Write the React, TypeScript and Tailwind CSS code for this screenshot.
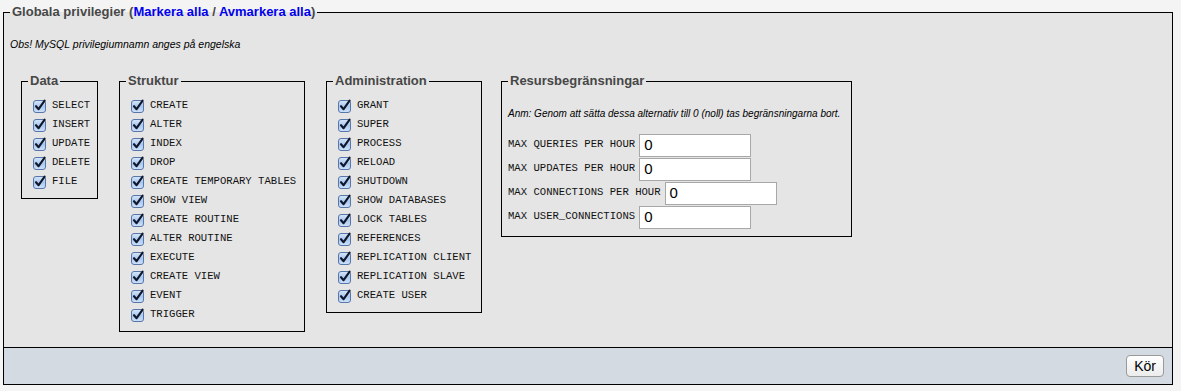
import React from "react";

const Check = () => (
  <svg width="14" height="14" viewBox="0 0 14 14" className="shrink-0">
    <defs>
      <linearGradient id="cbg" x1="0" y1="0" x2="0" y2="1">
        <stop offset="0" stopColor="#d8e7fa" />
        <stop offset="0.5" stopColor="#a9c8f0" />
        <stop offset="1" stopColor="#cfe2fb" />
      </linearGradient>
    </defs>
    <rect x="0.5" y="1.5" width="12" height="12" rx="2.5" fill="url(#cbg)" stroke="#5876a8" />
    <path d="M3 7.2 L5.6 10.2 L11.6 1.6" fill="none" stroke="#10172a" strokeWidth="2.1" strokeLinecap="round" strokeLinejoin="round" />
  </svg>
);

const mono = { fontFamily: '"Liberation Mono", "Courier New", monospace' };
const sans = { fontFamily: '"Liberation Sans", Arial, sans-serif' };

function Group({ title, items, width }: { title: string; items: string[]; width: string }) {
  return (
    <fieldset className={`border border-black pl-[6px] pb-[7px] ${width}`}>
      <legend className="px-[2px] text-[13px] leading-[16px] font-bold text-[#474747]" style={sans}>
        {title}
      </legend>
      <div className="pt-[7px] pl-[5px] flex flex-col">
        {items.map((it) => (
          <label key={it} className="h-[19px] flex items-center gap-[5px]">
            <Check />
            <span className="text-[10.6px] text-[#111] whitespace-pre" style={mono}>
              {it}
            </span>
          </label>
        ))}
      </div>
    </fieldset>
  );
}

function LimitRow({ label, w }: { label: string; w: string }) {
  return (
    <div className="h-[24px] flex items-center gap-[4px]">
      <span className="text-[10.6px] text-[#111] whitespace-pre" style={mono}>
        {label}
      </span>
      <div
        className={`h-[23px] ${w} bg-white border border-[#a8a8a8] flex items-center pl-[4px] text-[15px] text-black`}
        style={sans}
      >
        0
      </div>
    </div>
  );
}

export default function App() {
  return (
    <div className="min-h-[391px] bg-[#f4f4f4] pt-[4px]" style={sans}>
      <div className="ml-[3px] w-[1170px]">
        <fieldset className="border border-black bg-[#e5e5e5] px-[6px] pb-[15px]">
          <legend className="px-[2px] text-[13px] leading-[16px] font-bold text-[#474747]">
            Globala privilegier (<span className="text-[#0000ee]">Markera alla</span> /{" "}
            <span className="text-[#0000ee]">Avmarkera alla</span>)
          </legend>
          <p className="mt-[18px] text-[10.5px] leading-[13px] italic text-black">
            Obs! MySQL privilegiumnamn anges på engelska
          </p>
          <div className="mt-[22px] flex items-start pl-[11px]">
            <Group
              title="Data"
              width="w-[77px]"
              items={["SELECT", "INSERT", "UPDATE", "DELETE", "FILE"]}
            />
            <div className="ml-[21px]">
              <Group
                title="Struktur"
                width="w-[186px]"
                items={[
                  "CREATE",
                  "ALTER",
                  "INDEX",
                  "DROP",
                  "CREATE TEMPORARY TABLES",
                  "SHOW VIEW",
                  "CREATE ROUTINE",
                  "ALTER ROUTINE",
                  "EXECUTE",
                  "CREATE VIEW",
                  "EVENT",
                  "TRIGGER",
                ]}
              />
            </div>
            <div className="ml-[21px]">
              <Group
                title="Administration"
                width="w-[156px]"
                items={[
                  "GRANT",
                  "SUPER",
                  "PROCESS",
                  "RELOAD",
                  "SHUTDOWN",
                  "SHOW DATABASES",
                  "LOCK TABLES",
                  "REFERENCES",
                  "REPLICATION CLIENT",
                  "REPLICATION SLAVE",
                  "CREATE USER",
                ]}
              />
            </div>
            <fieldset className="ml-[19px] w-[351px] border border-black pl-[6px] pb-[7px]">
              <legend className="px-[2px] text-[13px] leading-[16px] font-bold text-[#474747]">
                Resursbegränsningar
              </legend>
              <div>
                <p className="mt-[18px] text-[10px] leading-[13px] italic text-black whitespace-nowrap">
                  Anm: Genom att sätta dessa alternativ till 0 (noll) tas begränsningarna bort.
                </p>
                <div className="mt-[13px] flex flex-col">
                  <LimitRow label="MAX QUERIES PER HOUR" w="w-[112px]" />
                  <LimitRow label="MAX UPDATES PER HOUR" w="w-[112px]" />
                  <LimitRow label="MAX CONNECTIONS PER HOUR" w="w-[112px]" />
                  <LimitRow label="MAX USER_CONNECTIONS" w="w-[112px]" />
                </div>
              </div>
            </fieldset>
          </div>
        </fieldset>
        <div className="h-[37px] bg-[#d3dae1] border-x border-b border-black flex items-center justify-end pr-[8px]">
          <button
            className="h-[22px] px-[7px] rounded-[4px] border border-[#9a9a9a] bg-gradient-to-b from-white to-[#ececec] text-[14px] text-black leading-none"
            style={sans}
          >
            Kör
          </button>
        </div>
      </div>
    </div>
  );
}
